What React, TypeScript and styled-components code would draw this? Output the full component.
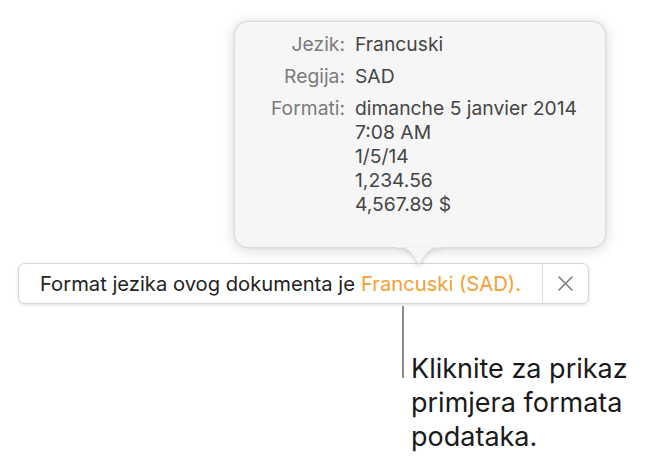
import React from "react";
import styled, { createGlobalStyle } from "styled-components";

const GlobalStyle = createGlobalStyle`
  html, body {
    margin: 0;
    padding: 0;
    background: #ffffff;
  }
  body {
    font-family: Inter, Roboto, "Liberation Sans", sans-serif;
    -webkit-font-smoothing: antialiased;
  }
`;

const Page = styled.div`
  width: 657px;
  height: 465px;
  padding-top: 21px;
  box-sizing: border-box;
  display: flex;
  flex-direction: column;
  overflow: hidden;
`;

const Popover = styled.div`
  position: relative;
  margin-left: 234px;
  width: 372px;
  height: 227px;
  box-sizing: border-box;
  padding: 10px 0 0 0;
  background: #f6f6f6;
  border: 1px solid #dcdcdc;
  border-radius: 14px;
  box-shadow: 0 2px 14px rgba(0, 0, 0, 0.16), 0 0 2px rgba(0, 0, 0, 0.08);
`;

const Arrow = styled.svg`
  position: absolute;
  left: 162px;
  bottom: -20px;
  width: 44px;
  height: 20px;
  overflow: visible;
`;

const InfoGrid = styled.div`
  display: grid;
  grid-template-columns: 110px 1fr;
  column-gap: 10px;
  row-gap: 8px;
  font-size: 19.3px;
  line-height: 24px;
`;

const Label = styled.div`
  text-align: right;
  color: #7b7b7b;
`;

const Value = styled.div`
  color: #454545;
`;

const Bar = styled.div`
  margin-top: 15px;
  margin-left: 18px;
  width: 571px;
  height: 41px;
  box-sizing: border-box;
  display: flex;
  align-items: stretch;
  background: #ffffff;
  border: 1px solid #d6d6d6;
  border-radius: 7px;
  box-shadow: 0 1px 3px rgba(0, 0, 0, 0.14);
`;

const Message = styled.div`
  flex: 1;
  display: flex;
  align-items: center;
  padding-left: 21px;
  font-size: 20.2px;
  color: #232323;
  white-space: nowrap;
`;

const Highlight = styled.span`
  color: #f4a033;
  margin-left: 6px;
`;

const CloseButton = styled.div`
  width: 45px;
  border-left: 1px solid #dedede;
  display: flex;
  align-items: center;
  justify-content: center;
`;

const Callout = styled.div`
  display: flex;
  align-items: flex-start;
  margin-left: 402px;
`;

const CalloutLine = styled.div`
  width: 2px;
  height: 72px;
  margin-top: 2px;
  background: #8c8c8c;
`;

const CalloutText = styled.div`
  margin-top: 48px;
  margin-left: 7px;
  font-size: 27px;
  line-height: 34px;
  color: #1a1a1a;
`;

const rows: { label: string; values: string[] }[] = [
  { label: "Jezik:", values: ["Francuski"] },
  { label: "Regija:", values: ["SAD"] },
  {
    label: "Formati:",
    values: ["dimanche 5 janvier 2014", "7:08 AM", "1/5/14", "1,234.56", "4,567.89 $"],
  },
];

export default function App() {
  return (
    <>
      <GlobalStyle />
      <Page>
        <Popover>
          <InfoGrid>
            {rows.map((r) => (
              <React.Fragment key={r.label}>
                <Label>{r.label}</Label>
                <Value>
                  {r.values.map((v) => (
                    <div key={v}>{v}</div>
                  ))}
                </Value>
              </React.Fragment>
            ))}
          </InfoGrid>
          <Arrow viewBox="0 0 44 20">
            <path
              d="M0 0 C10 0 14 4 19 14 Q22 19.5 25 14 C30 4 34 0 44 0 Z"
              fill="#f6f6f6"
              stroke="#dcdcdc"
              strokeWidth="1"
              style={{ filter: "drop-shadow(0 2px 2px rgba(0,0,0,0.12))" }}
            />
            <rect x="-1" y="-2" width="46" height="2.6" fill="#f6f6f6" />
          </Arrow>
        </Popover>
        <Bar>
          <Message>
            Format jezika ovog dokumenta je
            <Highlight>Francuski (SAD).</Highlight>
          </Message>
          <CloseButton>
            <svg width="15" height="15" viewBox="0 0 15 15">
              <path d="M1 1 L14 14 M14 1 L1 14" stroke="#7c7c7c" strokeWidth="1.6" strokeLinecap="round" />
            </svg>
          </CloseButton>
        </Bar>
        <Callout>
          <CalloutLine />
          <CalloutText>
            Kliknite za prikaz
            <br />
            primjera formata
            <br />
            podataka.
          </CalloutText>
        </Callout>
      </Page>
    </>
  );
}
